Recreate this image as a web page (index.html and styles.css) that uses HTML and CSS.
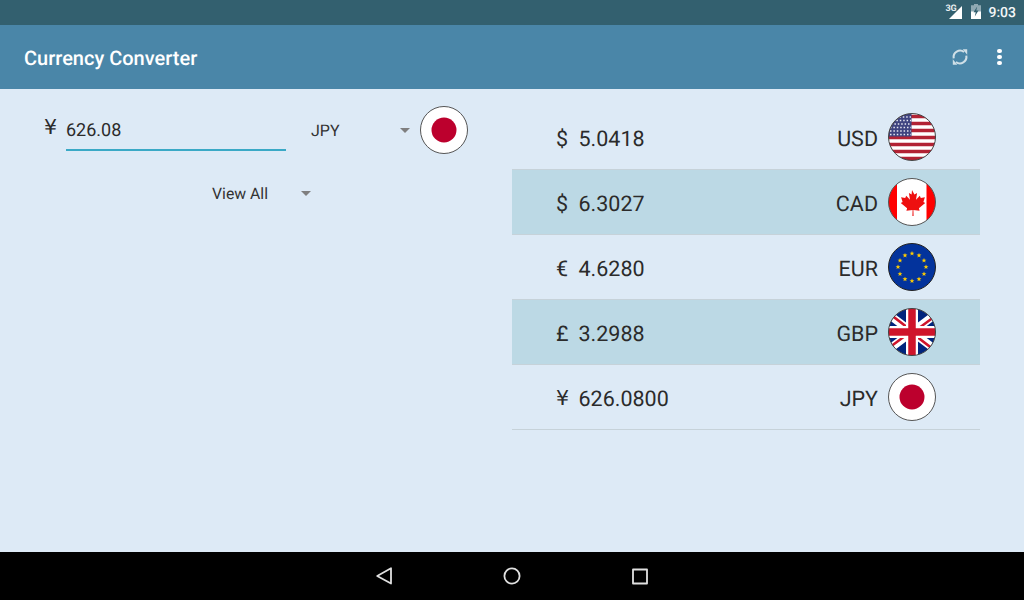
FILE: index.html
```html
<!DOCTYPE html>
<html lang="en">
<head>
<meta charset="utf-8">
<title>Currency Converter</title>
<link rel="stylesheet" href="styles.css">
</head>
<body>
<svg class="defs" width="0" height="0" aria-hidden="true">
  <defs>
    <clipPath id="disc"><circle cx="24" cy="24" r="23.5"/></clipPath>
    <path id="star" transform="scale(1.300)" d="M0-1.900L.56-.6 1.900-.6.80.25 1.180 1.600 0 .8-1.180 1.600-.8.25-1.900-.6-.56-.6z" fill="#fc0"/>
    <symbol id="flag-jpy" viewBox="0 0 48 48">
      <circle cx="24" cy="24" r="23.5" fill="#fff"/>
      <circle cx="24" cy="24" r="12.5" fill="#bc002d"/>
      <circle cx="24" cy="24" r="23.5" fill="none" stroke="#555" stroke-width="1"/>
    </symbol>
    <symbol id="flag-usd" viewBox="0 0 48 48">
      <g clip-path="url(#disc)">
        <rect width="48" height="48" fill="#fff"/>
        <path d="M0 3.500h48M0 10.500h48M0 17.500h48M0 24.500h48M0 31.500h48M0 38.500h48M0 45.500h48" stroke="#b22234" stroke-width="3.500"/>
        <rect width="23.500" height="23.500" fill="#3f4480"/>
        <path d="M8 4h15M5 7.500h18M3 11h20M2 14.500h21M2 18h21M2 21.500h21" stroke="#e8e8f0" stroke-width="1.500" stroke-dasharray="1.500 1.900"/>
      </g>
      <circle cx="24" cy="24" r="23.5" fill="none" stroke="#444" stroke-width="1"/>
    </symbol>
    <symbol id="flag-cad" viewBox="0 0 48 48">
      <g clip-path="url(#disc)">
        <rect width="48" height="48" fill="#fff"/>
        <rect width="9" height="48" fill="#f00"/>
        <rect x="38.500" width="9.500" height="48" fill="#f00"/>
        <path d="M24 12l2.400 4.500 2.700-1.400-1.100 6.700 3.800-4 1 2.200 4.100-.8-1.500 4.900 1.800.9-6.300 5.200.7 2.500-6.200-.8.200 6h-1.200l.2-6-6.200.8.7-2.500-6.300-5.200 1.800-.9-1.500-4.900 4.100.8 1-2.200 3.800 4-1.100-6.700 2.700 1.400z" fill="#ee1010"/>
      </g>
      <circle cx="24" cy="24" r="23.5" fill="none" stroke="#555" stroke-width="1"/>
    </symbol>
    <symbol id="flag-eur" viewBox="0 0 48 48">
      <circle cx="24" cy="24" r="23.500" fill="#03339c"/>
      <use href="#star" x="24" y="10.500"/><use href="#star" x="31" y="12.400"/><use href="#star" x="36" y="17.500"/>
      <use href="#star" x="38" y="24"/><use href="#star" x="36" y="31"/><use href="#star" x="31" y="36.100"/>
      <use href="#star" x="24" y="38"/><use href="#star" x="17" y="36.100"/><use href="#star" x="12" y="31"/>
      <use href="#star" x="10" y="24"/><use href="#star" x="12" y="17.500"/><use href="#star" x="17" y="12.400"/>
      <circle cx="24" cy="24" r="23.500" fill="none" stroke="#222" stroke-width="1"/>
    </symbol>
    <symbol id="flag-gbp" viewBox="0 0 48 48">
      <g clip-path="url(#disc)">
        <rect width="48" height="48" fill="#00247d"/>
        <path d="M0 6l48 36M48 6L0 42" stroke="#fff" stroke-width="8"/>
        <path d="M0 4.500l22 17M48 7.500L27 23M48 43.500l-22-17M0 40.500L21 25" stroke="#cf142b" stroke-width="2.600"/>
        <path d="M24 0v48M0 24h48" stroke="#fff" stroke-width="12"/>
        <path d="M24 0v48M0 24h48" stroke="#cf142b" stroke-width="7.500"/>
      </g>
      <circle cx="24" cy="24" r="23.500" fill="none" stroke="#444" stroke-width="1"/>
    </symbol>
  </defs>
</svg>

<div class="screen">
  <div class="status-bar">
    <span class="net-wrap">
      <span class="net-label">3G</span>
      <svg class="signal" viewBox="0 0 13 13"><path d="M13 0v13H0z" fill="#fff"/></svg>
    </span>
    <svg class="battery" viewBox="0 0 10 15">
      <path d="M3 0h4v1.200h3V15H0V1.200h3z" fill="#8fa9b3"/>
      <path d="M0 7.500h10V15H0z" fill="#fff"/>
      <path d="M6.200 2.500L2.500 8.200h2.200L3.800 12.500 7.500 6.500H5.300z" fill="#33606f"/>
    </svg>
    <span class="clock">9:03</span>
  </div>

  <header class="app-bar">
    <h1 class="app-title">Currency Converter</h1>
    <svg class="refresh" viewBox="0 0 20 20">
      <g fill="none" stroke="#cfdfe7" stroke-width="2.300">
        <path d="M3 11.500A7.200 7.200 0 0 1 14.500 4.500"/>
        <path d="M17 8.500A7.200 7.200 0 0 1 5.500 15.500"/>
      </g>
      <path d="M13 1.500h5v6zM7 18.500H2v-6z" fill="#cfdfe7"/>
    </svg>
    <span class="overflow"><i></i><i></i><i></i></span>
  </header>

  <main class="content">
    <section class="input-panel">
      <div class="input-row">
        <span class="input-symbol">¥</span>
        <div class="amount">626.08</div>
        <div class="spinner code-spinner"><span>JPY</span><i class="caret"></i></div>
        <svg class="flag"><use href="#flag-jpy"/></svg>
      </div>
      <div class="spinner view-spinner"><span>View All</span><i class="caret"></i></div>
    </section>

    <section class="rates">
      <div class="rate"><span class="sym">$</span><span class="val">5.0418</span><span class="code">USD</span><svg class="flag"><use href="#flag-usd"/></svg></div>
      <div class="rate alt"><span class="sym">$</span><span class="val">6.3027</span><span class="code">CAD</span><svg class="flag"><use href="#flag-cad"/></svg></div>
      <div class="rate"><span class="sym">€</span><span class="val">4.6280</span><span class="code">EUR</span><svg class="flag"><use href="#flag-eur"/></svg></div>
      <div class="rate alt"><span class="sym">£</span><span class="val">3.2988</span><span class="code">GBP</span><svg class="flag"><use href="#flag-gbp"/></svg></div>
      <div class="rate"><span class="sym yen">¥</span><span class="val">626.0800</span><span class="code">JPY</span><svg class="flag"><use href="#flag-jpy"/></svg></div>
    </section>
  </main>

  <nav class="nav-bar">
    <svg width="20" height="20" viewBox="0 0 20 20" fill="none" stroke="#e0e0e0" stroke-width="1.800" stroke-linejoin="round"><path d="M17 2.300v15.200L3.200 10z"/></svg>
    <svg width="20" height="20" viewBox="0 0 20 20" fill="none" stroke="#e0e0e0" stroke-width="1.800"><circle cx="10" cy="10" r="7.600"/></svg>
    <svg width="20" height="20" viewBox="0 0 20 20" fill="none" stroke="#e0e0e0" stroke-width="1.800" stroke-linejoin="round"><rect x="3" y="3.500" width="14" height="14"/></svg>
  </nav>
</div>
</body>
</html>
```

FILE: styles.css
```css
* { box-sizing: border-box; }
html, body { margin: 0; padding: 0; }
body {
  width: 1024px;
  height: 600px;
  overflow: hidden;
  font-family: Roboto, "Liberation Sans", sans-serif;
  color: #2b2b2b;
  text-rendering: geometricPrecision;
}
.defs { display: block; height: 0; }
.screen { width: 1024px; height: 600px; display: flex; flex-direction: column; }

.status-bar {
  height: 25px;
  flex: none;
  background: #33606f;
  display: flex;
  align-items: center;
  justify-content: flex-end;
  padding-right: 8px;
  color: #fff;
}
.net-wrap { display: flex; align-items: flex-start; margin-right: 9px; height: 15px; }
.net-label { font-size: 9px; font-weight: 700; line-height: 9px; width: 12px; margin-right: -8px; letter-spacing: -.2px; color: #e8eef0; position: relative; z-index: 1; }
.signal { margin-top: 1px; width: 13px; height: 13px; }
.battery { width: 10px; height: 15px; margin-right: 7px; margin-top: -2px; }
.clock { font-size: 14px; font-weight: 500; color: #f4f7f8; }

.app-bar {
  height: 64px;
  flex: none;
  background: #4a86a8;
  display: flex;
  align-items: center;
  padding: 0 22px 0 24px;
}
.app-title { margin: 2px 0 0; flex: 1; font-size: 20px; font-weight: 500; color: #fff; }
.refresh { width: 18px; height: 18px; margin-right: 28px; }
.overflow { display: flex; flex-direction: column; gap: 1.500px; width: 5px; }
.overflow i { width: 4.500px; height: 4.500px; border-radius: 50%; background: #fff; }

.content {
  flex: 1;
  background: #ddeaf6;
  display: flex;
  padding-top: 16px;
}
.input-panel { width: 512px; padding: 1px 0 0 44px; }
.input-row { display: flex; align-items: flex-start; height: 48px; }
.input-symbol { width: 22px; font-size: 20.500px; line-height: 22px; margin-top: 10px; font-family: "DejaVu Sans", Roboto, sans-serif; }
.amount {
  width: 220px;
  height: 45px;
  padding-top: 14px;
  font-size: 18px;
  line-height: 22px;
  border-bottom: 2px solid #3aa9c6;
}
.spinner { display: flex; align-items: center; font-size: 16px; color: #333; }
.caret {
  width: 0;
  height: 0;
  border-left: 5px solid transparent;
  border-right: 5px solid transparent;
  border-top: 5px solid #7f7f7f;
}
.code-spinner { width: 134px; padding: 0 10px 0 25px; margin-top: 13px; height: 22px; justify-content: space-between; }
.view-spinner { width: 99px; margin: 29px 0 0 168px; height: 20px; justify-content: space-between; font-size: 15.800px; }

.flag { width: 48px; height: 48px; flex: none; display: block; }

.rates { width: 468px; display: flex; flex-direction: column; }
.rate {
  height: 65px;
  display: flex;
  align-items: center;
  padding: 0 44px;
  border-bottom: 1px solid #c6d2d9;
  font-size: 21.500px;
}
.rate.alt { background: #bcd9e5; }
.sym, .val, .code { margin-top: 4px; }
.sym { width: 22.500px; }
.yen { font-family: "DejaVu Sans", Roboto, sans-serif; font-size: 20.500px; margin-top: 2px; }
.val { flex: 1; }
.code { margin-right: 10px; }
.rate .flag { margin-top: -1px; }

.nav-bar {
  height: 48px;
  flex: none;
  background: #000;
  display: flex;
  align-items: center;
  justify-content: center;
  gap: 108px;
}
```
